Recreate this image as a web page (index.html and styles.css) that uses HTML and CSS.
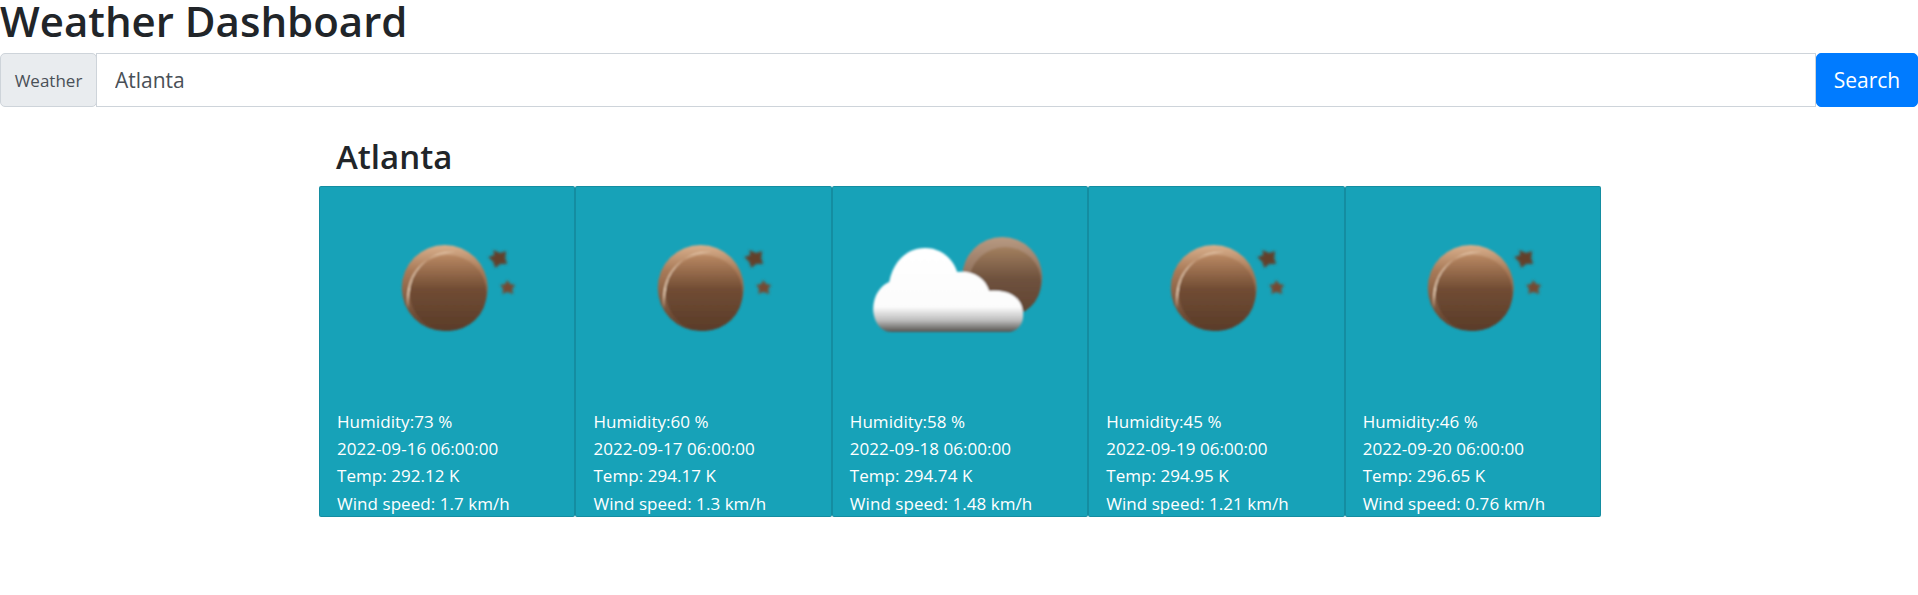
FILE: index.html
```html
<!DOCTYPE html>
<html lang="en">
<head>
  <meta charset="UTF-8">
  <title>Weather Dashboard</title>
  <link rel="stylesheet" href="styles.css">
</head>
<body>

  <h1>Weather Dashboard</h1>

  <div class="input-group">
    <span class="input-label">Weather</span>
    <input class="city-input" type="text" value="Atlanta">
    <button class="search-btn">Search</button>
  </div>

  <div class="forecast">
    <h2>Atlanta</h2>

    <svg width="0" height="0" class="defs">
      <defs>
        <linearGradient id="rim" x1="0" y1="0" x2="0" y2="1">
          <stop offset="0" stop-color="#d9b08c"/>
          <stop offset="0.3" stop-color="#a87a58"/>
          <stop offset="1" stop-color="#5c3e2b"/>
        </linearGradient>
        <linearGradient id="core" x1="0" y1="0" x2="0" y2="1">
          <stop offset="0" stop-color="#b98862"/>
          <stop offset="0.45" stop-color="#714c34"/>
          <stop offset="1" stop-color="#5a3c29"/>
        </linearGradient>
        <linearGradient id="sunrim" x1="0" y1="0" x2="0" y2="1">
          <stop offset="0" stop-color="#b89a82"/>
          <stop offset="1" stop-color="#644634"/>
        </linearGradient>
        <linearGradient id="suncore" x1="0" y1="0" x2="0" y2="1">
          <stop offset="0" stop-color="#a3805f"/>
          <stop offset="0.45" stop-color="#6f523e"/>
          <stop offset="1" stop-color="#5f4330"/>
        </linearGradient>
        <linearGradient id="puff" x1="0" y1="0" x2="0" y2="1">
          <stop offset="0" stop-color="#ffffff"/>
          <stop offset="0.7" stop-color="#fcfcfc"/>
          <stop offset="0.86" stop-color="#bdbdbd"/>
          <stop offset="1" stop-color="#55534f"/>
        </linearGradient>
        <filter id="soft"><feGaussianBlur stdDeviation="1.2"/></filter>
        <filter id="softer"><feGaussianBlur stdDeviation="1.6"/></filter>
        <g id="moon">
          <g filter="url(#soft)">
            <circle cx="124.5" cy="101" r="43" fill="url(#rim)"/>
            <path d="M88 122C83 92 100 66 135 65C110 62 87 84 88 122Z" fill="#ecd2b8"/>
            <ellipse cx="128" cy="106" rx="38.5" ry="38" fill="url(#core)"/>
          </g>
          <g filter="url(#softer)">
            <path d="M173 63l7 3 6-2-1 7 2 6-7 0-5 4-2-6-5-5 6-2z" fill="#623f2a"/>
            <path d="M187 93l3 4 5 1-3 4 1 5-6-2-5 2 1-5-3-4 5-1z" fill="#744a30"/>
          </g>
        </g>
        <g id="cloudy" filter="url(#soft)">
          <circle cx="169" cy="90" r="40" fill="url(#sunrim)"/>
          <ellipse cx="172" cy="95" rx="36" ry="35" fill="url(#suncore)"/>
          <path d="M58 145C46 145 40 132 40 122C40 108 48 98 56 95C60 74 74 61 92 61C108 61 120 72 124 85C138 83 152 90 156 104C172 102 190 108 190 128C190 138 184 145 174 145Z" fill="url(#puff)"/>
        </g>
      </defs>
    </svg>

    <div class="card-deck">
      <div class="card">
        <svg class="card-icon" viewBox="0 0 254 221"><use href="#moon"/></svg>
        <p>Humidity:73 %</p>
        <p>2022-09-16 06:00:00</p>
        <p>Temp: 292.12 K</p>
        <p>Wind speed: 1.7 km/h</p>
      </div>
      <div class="card">
        <svg class="card-icon" viewBox="0 0 254 221"><use href="#moon"/></svg>
        <p>Humidity:60 %</p>
        <p>2022-09-17 06:00:00</p>
        <p>Temp: 294.17 K</p>
        <p>Wind speed: 1.3 km/h</p>
      </div>
      <div class="card">
        <svg class="card-icon" viewBox="0 0 254 221"><use href="#cloudy"/></svg>
        <p>Humidity:58 %</p>
        <p>2022-09-18 06:00:00</p>
        <p>Temp: 294.74 K</p>
        <p>Wind speed: 1.48 km/h</p>
      </div>
      <div class="card">
        <svg class="card-icon" viewBox="0 0 254 221"><use href="#moon"/></svg>
        <p>Humidity:45 %</p>
        <p>2022-09-19 06:00:00</p>
        <p>Temp: 294.95 K</p>
        <p>Wind speed: 1.21 km/h</p>
      </div>
      <div class="card">
        <svg class="card-icon" viewBox="0 0 254 221"><use href="#moon"/></svg>
        <p>Humidity:46 %</p>
        <p>2022-09-20 06:00:00</p>
        <p>Temp: 296.65 K</p>
        <p>Wind speed: 0.76 km/h</p>
      </div>
    </div>
  </div>

</body>
</html>
```

FILE: styles.css
```css
body {
  margin: 0;
  font-family: "Open Sans", "Noto Sans", sans-serif;
  color: #212529;
  background: #fff;
}

h1 {
  margin: 0 0 11px;
  font-size: 42px;
  font-weight: 600;
  line-height: 42px;
}

h2 {
  margin: 0 0 10px;
  padding-left: 17px;
  font-size: 33px;
  font-weight: 600;
  line-height: 39px;
}

.input-group {
  display: flex;
  height: 54px;
}

.input-label {
  display: flex;
  align-items: center;
  justify-content: center;
  box-sizing: border-box;
  width: 97px;
  background: #e9ecef;
  border: 1px solid #ced4da;
  border-radius: 5px;
  color: #495057;
  font-size: 17px;
}

.city-input {
  flex: 1;
  min-width: 0;
  box-sizing: border-box;
  margin-left: -1px;
  padding: 0 18px;
  background: #fff;
  border: 1px solid #ced4da;
  color: #495057;
  font-family: inherit;
  font-size: 21px;
}

.search-btn {
  width: 102px;
  background: #007bff;
  border: 1px solid #007bff;
  border-radius: 5px;
  color: #fff;
  font-family: inherit;
  font-size: 21px;
}

.forecast {
  width: 1282px;
  margin: 30px auto 0 319px;
}

.defs {
  position: absolute;
}

.card-deck {
  display: flex;
}

.card {
  flex: 1;
  box-sizing: border-box;
  height: 331px;
  background: #17a2b8;
  border: 1px solid rgba(0, 0, 0, 0.125);
  border-radius: 2px;
  color: #fff;
}

.card-icon {
  display: block;
  width: 100%;
  height: 221px;
}

.card p {
  margin: 0;
  padding-left: 17px;
  font-size: 17px;
  line-height: 27.2px;
  letter-spacing: 0.05px;
  white-space: nowrap;
}
```
